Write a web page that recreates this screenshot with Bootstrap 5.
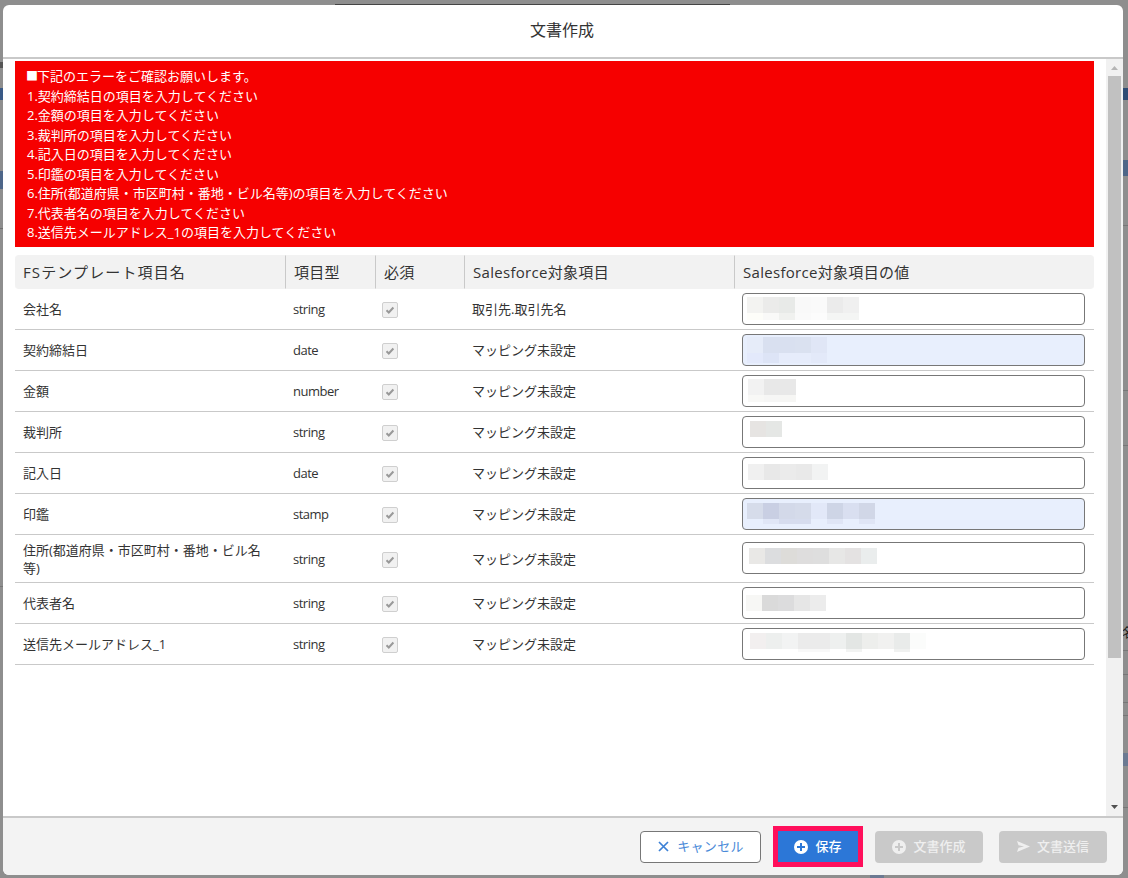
<!DOCTYPE html>
<html lang="ja">
<head>
<meta charset="utf-8">
<title>文書作成</title>
<link href="https://cdn.jsdelivr.net/npm/bootstrap@5.3.0/dist/css/bootstrap.min.css" rel="stylesheet">
<style>
html, body { height: 100%; }
body { background: #8e8e8e; overflow: hidden; font-family: "Open Sans", "Noto Sans CJK JP", sans-serif; font-size: 13px; color: #333; }
.under-page { position: absolute; inset: 0; width: 1128px; height: 878px; }
.page-wrap { position: relative; width: 1128px; height: 878px; padding: 5px 5px 3px 3px; }
.dlg { height: 870px; border: 0; border-radius: 6px; overflow: hidden; background: #fff; }
.dlg-head { height: 54px; flex: none; justify-content: center; padding: 0 2px 2px 0; border-bottom: 2px solid #c9c9c9; border-radius: 0; }
.dlg-title { font-size: 16px; font-weight: 400; line-height: 1.5; color: #333; margin: 0; }
.dlg-body { padding: 0; flex: 1 1 auto; min-height: 0; }
.dlg-main { padding: 2px 12px 0; min-width: 0; }
.err-box { background: #f60000; color: #fff; padding: 6px 12px 4.5px; line-height: 19.5px; margin-bottom: 8px; }
.err-mark { display: inline-block; width: 11px; font-size: 12px; margin-left: -1px; line-height: 1; }
.map-table { table-layout: fixed; width: 1079px; margin: 0; border-collapse: separate; border-spacing: 0; color: #333; }
.map-table th { height: 34px; background: #f2f2f2; font-size: 15px; font-weight: 400; padding: 0 8px; vertical-align: middle; border: 0; border-top: 1px solid #f2f2f2; border-bottom: 1px solid #f2f2f2; letter-spacing: .02em; }
.map-table th + th { border-left: 1px solid #c9c9c9; }
.map-table th:first-child { border-radius: 4px 0 0 4px; padding-left: 8px; letter-spacing: .075em; }
.map-table th:last-child { border-radius: 0 4px 4px 0; }
.map-table td { padding: 5.5px 8px; line-height: 18px; vertical-align: middle; border-bottom: 1px solid #c9c9c9; background: #fff; color: #333; }
.map-table td.val-cell { padding: 4px 9px 4px 8px; }
.map-table td.val-tall { padding: 7px 9px 0 8px; vertical-align: top; }
.map-table td.type-cell { padding-left: 8px; letter-spacing: -.5px; }
.fld-chk.form-check-input { display: block; width: 16px; height: 16px; margin: 2px 0 0 -1px; float: none; opacity: 1; border: 1px solid #cfcfcf; border-radius: 2px; background-color: #f1f1f1; }
.fld-chk.form-check-input:checked[type=checkbox] { background-color: #f1f1f1; border-color: #cfcfcf; background-image: url("data:image/svg+xml,%3csvg xmlns='http://www.w3.org/2000/svg' viewBox='0 0 16 16'%3e%3cpath fill='none' stroke='%23999' stroke-width='2' d='M4.5 8.2l2.3 2.3 4.6-5'/%3e%3c/svg%3e"); background-size: 16px 16px; }
.fld-chk.form-check-input:disabled { opacity: 1; }
.val-wrap { position: relative; height: 32px; }
.val-input.form-control { height: 32px; min-height: 0; padding: 0 8px; border: 1px solid #777; border-radius: 4px; background: #fff; box-shadow: none; font-size: 13px; }
.val-input.val-auto.form-control { background: #e8effd; }
.blur-mask { position: absolute; left: 0; top: 0; width: 200px; height: 32px; pointer-events: none; }
.scroll-col { width: 17px; flex: none; background: #f1f1f1; }
.scroll-btn { height: 17px; flex: none; }
.scroll-thumb { height: 582px; margin: 0 2px; background: #c1c1c1; flex: none; }
.scroll-rest { flex: 1 1 auto; }
.dlg-foot { height: 59px; flex: none; padding: 0 16px 0 0; gap: 0; background: #f3f3f3; border-top: 2px solid #c9c9c9; border-radius: 0; flex-wrap: nowrap; }
.dlg-foot > * { margin: 0; }
.act-btn.btn { height: 32px; font-size: 13px; font-weight: 500; line-height: 1; padding: 0; border-radius: 4px; display: flex; align-items: center; justify-content: center; gap: 7px; white-space: nowrap; }
.act-cancel.btn { width: 121px; background: #fff; border: 1px solid #777; color: #4a8ad8; font-weight: 400; margin-right: 12px; gap: 8px; letter-spacing: .3px; padding-left: 1px; }
.act-save.btn { width: 90px; height: 41px; background: #2c77d7; border: 5px solid #ff0f5b; border-radius: 0; color: #fff; margin-right: 12px; }
.act-off.btn, .act-off.btn:disabled { width: 108px; background: #c9c9c9; border: 0; color: #efefef; opacity: 1; }
.act-send.btn { margin-left: 16px; }
</style>
</head>
<body>
<svg class="under-page" viewBox="0 0 1128 878" aria-hidden="true">
  <rect x="335" y="4" width="395" height="1" fill="#444"/>
  <rect x="0" y="88" width="3" height="12" fill="#3a5a86"/>
  <rect x="0" y="171" width="3" height="18" fill="#4e6688"/>
  <rect x="0" y="62" width="3" height="6" fill="#555"/>
  <rect x="0" y="228" width="3" height="1" fill="#6f6f6f"/>
  <rect x="1123" y="88" width="5" height="12" fill="#2f4c75"/>
  <rect x="1123" y="160" width="5" height="16" fill="#4e6688"/>
  <rect x="1123" y="225" width="5" height="1" fill="#777"/>
  <rect x="1123" y="390" width="5" height="1" fill="#777"/>
  <rect x="1123" y="445" width="5" height="1" fill="#777"/>
  <rect x="1123" y="650" width="5" height="1" fill="#777"/>
  <rect x="1123" y="674" width="5" height="1" fill="#777"/>
  <rect x="1123" y="702" width="5" height="1" fill="#777"/>
  <rect x="1123" y="715" width="5" height="1" fill="#777"/>
  <rect x="1123" y="753" width="5" height="13" fill="#6c7a92"/>
  <rect x="1123" y="807" width="5" height="1" fill="#777"/>
  <rect x="870" y="875" width="14" height="3" fill="#6c7a92"/>
  <rect x="0" y="586" width="3" height="1" fill="#777"/>
  <text x="1122" y="637" font-size="13" fill="#222" font-family="Noto Sans CJK JP, sans-serif">名</text>
</svg>
<div class="page-wrap">
  <div class="modal-content dlg">
    <div class="modal-header dlg-head">
      <h1 class="dlg-title">文書作成</h1>
    </div>
    <div class="modal-body dlg-body d-flex">
      <div class="dlg-main flex-grow-1">
        <div class="err-box">
          <div><span class="err-mark">■</span>下記のエラーをご確認お願いします。</div>
          <div>1.契約締結日の項目を入力してください</div>
          <div>2.金額の項目を入力してください</div>
          <div>3.裁判所の項目を入力してください</div>
          <div>4.記入日の項目を入力してください</div>
          <div>5.印鑑の項目を入力してください</div>
          <div>6.住所(都道府県・市区町村・番地・ビル名等)の項目を入力してください</div>
          <div>7.代表者名の項目を入力してください</div>
          <div>8.送信先メールアドレス_1の項目を入力してください</div>
        </div>
        <table class="table map-table">
          <colgroup><col style="width:270px"><col style="width:90px"><col style="width:89px"><col style="width:270px"><col style="width:360px"></colgroup>
          <thead>
            <tr><th>FSテンプレート項目名</th><th>項目型</th><th>必須</th><th>Salesforce対象項目</th><th>Salesforce対象項目の値</th></tr>
          </thead>
          <tbody>
            <tr><td>会社名</td><td class="type-cell">string</td><td><input class="form-check-input fld-chk" type="checkbox" checked disabled aria-label="必須"></td><td>取引先.取引先名</td>
              <td class="val-cell"><div class="val-wrap"><input class="form-control val-input" type="text" aria-label="会社名">
                <svg class="blur-mask" viewBox="0 0 200 32" shape-rendering="crispEdges" aria-hidden="true"><rect x="5" y="4" width="16" height="16" fill="#f3f3f1"/><rect x="21" y="4" width="16" height="16" fill="#ebebea"/><rect x="37" y="4" width="16" height="16" fill="#e8eae8"/><rect x="53" y="4" width="16" height="16" fill="#f9f9f9"/><rect x="69" y="4" width="16" height="16" fill="#fafafa"/><rect x="85" y="4" width="16" height="16" fill="#ebebeb"/><rect x="101" y="4" width="16" height="16" fill="#f0f0f0"/><rect x="5" y="20" width="16" height="7" fill="#fdfdf9"/><rect x="21" y="20" width="16" height="7" fill="#f9f9f8"/><rect x="37" y="20" width="16" height="7" fill="#f0f1ef"/><rect x="53" y="20" width="16" height="7" fill="#fafafa"/><rect x="69" y="20" width="16" height="7" fill="#fcfcfc"/><rect x="85" y="20" width="16" height="7" fill="#f4f5f4"/><rect x="101" y="20" width="16" height="7" fill="#f4f5f4"/></svg></div></td></tr>
            <tr><td>契約締結日</td><td class="type-cell">date</td><td><input class="form-check-input fld-chk" type="checkbox" checked disabled aria-label="必須"></td><td>マッピング未設定</td>
              <td class="val-cell"><div class="val-wrap"><input class="form-control val-input val-auto" type="text" aria-label="契約締結日">
                <svg class="blur-mask" viewBox="0 0 200 32" shape-rendering="crispEdges" aria-hidden="true"><rect x="5" y="3" width="16" height="16" fill="#e6ecf9"/><rect x="21" y="3" width="16" height="16" fill="#d9e0f0"/><rect x="37" y="3" width="16" height="16" fill="#d9e0f0"/><rect x="53" y="3" width="16" height="16" fill="#dae1f0"/><rect x="69" y="3" width="16" height="16" fill="#e0e6f6"/><rect x="5" y="19" width="16" height="10" fill="#e3e9fb"/><rect x="21" y="19" width="16" height="10" fill="#dde4f6"/><rect x="37" y="19" width="16" height="10" fill="#e6ecfb"/><rect x="53" y="19" width="16" height="10" fill="#e6ecfb"/><rect x="69" y="19" width="16" height="10" fill="#e3e9f9"/></svg></div></td></tr>
            <tr><td>金額</td><td class="type-cell">number</td><td><input class="form-check-input fld-chk" type="checkbox" checked disabled aria-label="必須"></td><td>マッピング未設定</td>
              <td class="val-cell"><div class="val-wrap"><input class="form-control val-input" type="text" aria-label="金額">
                <svg class="blur-mask" viewBox="0 0 200 32" shape-rendering="crispEdges" aria-hidden="true"><rect x="6" y="4" width="16" height="16" fill="#f2f2f2"/><rect x="22" y="4" width="16" height="16" fill="#e8e8e8"/><rect x="38" y="4" width="16" height="16" fill="#e8e8e8"/><rect x="6" y="20" width="16" height="7" fill="#f8f8f6"/><rect x="22" y="20" width="16" height="7" fill="#f6f6f5"/><rect x="38" y="20" width="16" height="7" fill="#f6f6f4"/></svg></div></td></tr>
            <tr><td>裁判所</td><td class="type-cell">string</td><td><input class="form-check-input fld-chk" type="checkbox" checked disabled aria-label="必須"></td><td>マッピング未設定</td>
              <td class="val-cell"><div class="val-wrap"><input class="form-control val-input" type="text" aria-label="裁判所">
                <svg class="blur-mask" viewBox="0 0 200 32" shape-rendering="crispEdges" aria-hidden="true"><rect x="8" y="5" width="16" height="16" fill="#e6e4e2"/><rect x="24" y="5" width="16" height="16" fill="#e5e7e5"/></svg></div></td></tr>
            <tr><td>記入日</td><td class="type-cell">date</td><td><input class="form-check-input fld-chk" type="checkbox" checked disabled aria-label="必須"></td><td>マッピング未設定</td>
              <td class="val-cell"><div class="val-wrap"><input class="form-control val-input" type="text" aria-label="記入日">
                <svg class="blur-mask" viewBox="0 0 200 32" shape-rendering="crispEdges" aria-hidden="true"><rect x="6" y="7" width="16" height="16" fill="#f0f0f0"/><rect x="22" y="7" width="16" height="16" fill="#e8e8e8"/><rect x="38" y="7" width="16" height="16" fill="#ebebeb"/><rect x="54" y="7" width="16" height="16" fill="#e9e9e9"/><rect x="70" y="7" width="16" height="16" fill="#f2f3f3"/></svg></div></td></tr>
            <tr><td>印鑑</td><td class="type-cell">stamp</td><td><input class="form-check-input fld-chk" type="checkbox" checked disabled aria-label="必須"></td><td>マッピング未設定</td>
              <td class="val-cell"><div class="val-wrap"><input class="form-control val-input val-auto" type="text" aria-label="印鑑">
                <svg class="blur-mask" viewBox="0 0 200 32" shape-rendering="crispEdges" aria-hidden="true"><rect x="5" y="5" width="16" height="16" fill="#d6dcea"/><rect x="21" y="5" width="16" height="16" fill="#c9cfe3"/><rect x="37" y="5" width="16" height="16" fill="#d3d9e9"/><rect x="53" y="5" width="16" height="16" fill="#d5dbea"/><rect x="69" y="5" width="16" height="16" fill="#e2e8f8"/><rect x="85" y="5" width="16" height="16" fill="#ced5e6"/><rect x="101" y="5" width="16" height="16" fill="#d9dff0"/><rect x="117" y="5" width="16" height="16" fill="#d1d7e7"/><rect x="21" y="21" width="16" height="5" fill="#e0e6f6"/><rect x="37" y="21" width="16" height="5" fill="#d6dcee"/><rect x="53" y="21" width="16" height="5" fill="#d6dcee"/><rect x="85" y="21" width="16" height="5" fill="#dfe5f5"/><rect x="117" y="21" width="16" height="5" fill="#dfe5f5"/></svg></div></td></tr>
            <tr><td>住所(都道府県・市区町村・番地・ビル名等)</td><td class="type-cell">string</td><td><input class="form-check-input fld-chk" type="checkbox" checked disabled aria-label="必須"></td><td>マッピング未設定</td>
              <td class="val-cell val-tall"><div class="val-wrap"><input class="form-control val-input" type="text" aria-label="住所">
                <svg class="blur-mask" viewBox="0 0 200 32" shape-rendering="crispEdges" aria-hidden="true"><rect x="7" y="6" width="16" height="16" fill="#e9e8e6"/><rect x="23" y="6" width="16" height="16" fill="#dcdddf"/><rect x="39" y="6" width="16" height="16" fill="#dddcd9"/><rect x="55" y="6" width="16" height="16" fill="#dedddd"/><rect x="71" y="6" width="16" height="16" fill="#dedede"/><rect x="87" y="6" width="16" height="16" fill="#e7e7e6"/><rect x="103" y="6" width="16" height="16" fill="#e4e2e2"/><rect x="119" y="6" width="16" height="16" fill="#eaeded"/></svg></div></td></tr>
            <tr><td>代表者名</td><td class="type-cell">string</td><td><input class="form-check-input fld-chk" type="checkbox" checked disabled aria-label="必須"></td><td>マッピング未設定</td>
              <td class="val-cell"><div class="val-wrap"><input class="form-control val-input" type="text" aria-label="代表者名">
                <svg class="blur-mask" viewBox="0 0 200 32" shape-rendering="crispEdges" aria-hidden="true"><rect x="4" y="8" width="16" height="16" fill="#f7f7f5"/><rect x="20" y="8" width="16" height="16" fill="#dadada"/><rect x="36" y="8" width="16" height="16" fill="#dcdcdd"/><rect x="52" y="8" width="16" height="16" fill="#e6e6e6"/><rect x="68" y="8" width="16" height="16" fill="#ececec"/></svg></div></td></tr>
            <tr><td>送信先メールアドレス_1</td><td class="type-cell">string</td><td><input class="form-check-input fld-chk" type="checkbox" checked disabled aria-label="必須"></td><td>マッピング未設定</td>
              <td class="val-cell"><div class="val-wrap"><input class="form-control val-input" type="text" aria-label="送信先メールアドレス">
                <svg class="blur-mask" viewBox="0 0 200 32" shape-rendering="crispEdges" aria-hidden="true"><rect x="8" y="5" width="16" height="16" fill="#f2efef"/><rect x="24" y="5" width="16" height="16" fill="#edefee"/><rect x="40" y="5" width="16" height="16" fill="#f2f3f3"/><rect x="56" y="5" width="16" height="16" fill="#ebebeb"/><rect x="72" y="5" width="16" height="16" fill="#ebebeb"/><rect x="88" y="5" width="16" height="16" fill="#eef0ef"/><rect x="104" y="5" width="16" height="16" fill="#e3e6e4"/><rect x="120" y="5" width="16" height="16" fill="#edeeec"/><rect x="136" y="5" width="16" height="16" fill="#f1f1f0"/><rect x="152" y="5" width="16" height="16" fill="#e9ebea"/><rect x="168" y="5" width="16" height="16" fill="#fbfcfb"/><rect x="56" y="21" width="32" height="3" fill="#f8f8f8"/><rect x="104" y="21" width="16" height="3" fill="#f2f3f2"/><rect x="152" y="21" width="16" height="3" fill="#f0f1f0"/></svg></div></td></tr>
          </tbody>
        </table>
      </div>
      <div class="scroll-col d-flex flex-column" aria-hidden="true">
        <svg class="scroll-btn" width="17" height="17" viewBox="0 0 17 17"><path d="M5 11l3.500-4 3.500 4z" fill="#b5b5b5"/></svg>
        <div class="scroll-thumb"></div>
        <div class="scroll-rest"></div>
        <svg class="scroll-btn" width="17" height="17" viewBox="0 0 17 17"><path d="M5 6l3.500 4 3.500-4z" fill="#505050"/></svg>
      </div>
    </div>
    <div class="modal-footer dlg-foot">
      <button type="button" class="btn act-btn act-cancel">
        <svg width="11" height="11" viewBox="0 0 11 11" aria-hidden="true"><path d="M1 1l9 9M10 1l-9 9" stroke="#3c80d6" stroke-width="1.700" fill="none"/></svg>キャンセル</button>
      <button type="button" class="btn act-btn act-save">
        <svg width="14" height="14" viewBox="0 0 14 14" aria-hidden="true"><circle cx="7" cy="7" r="7" fill="#fff"/><path d="M7 3v8M3 7h8" stroke="#2c77d7" stroke-width="2"/></svg>保存</button>
      <button type="button" class="btn act-btn act-off" disabled>
        <svg width="14" height="14" viewBox="0 0 14 14" aria-hidden="true"><circle cx="7" cy="7" r="7" fill="#efefef"/><path d="M7 3v8M3 7h8" stroke="#c9c9c9" stroke-width="2"/></svg>文書作成</button>
      <button type="button" class="btn act-btn act-off act-send" disabled>
        <svg width="13" height="11" viewBox="0 0 13 11" aria-hidden="true"><path d="M0 0l13 5.500L0 11l1.500-4.200L7 5.500 1.500 4.200z" fill="#efefef"/></svg>文書送信</button>
    </div>
  </div>
</div>
<script src="https://cdn.jsdelivr.net/npm/bootstrap@5.3.0/dist/js/bootstrap.bundle.min.js"></script>
</body>
</html>
